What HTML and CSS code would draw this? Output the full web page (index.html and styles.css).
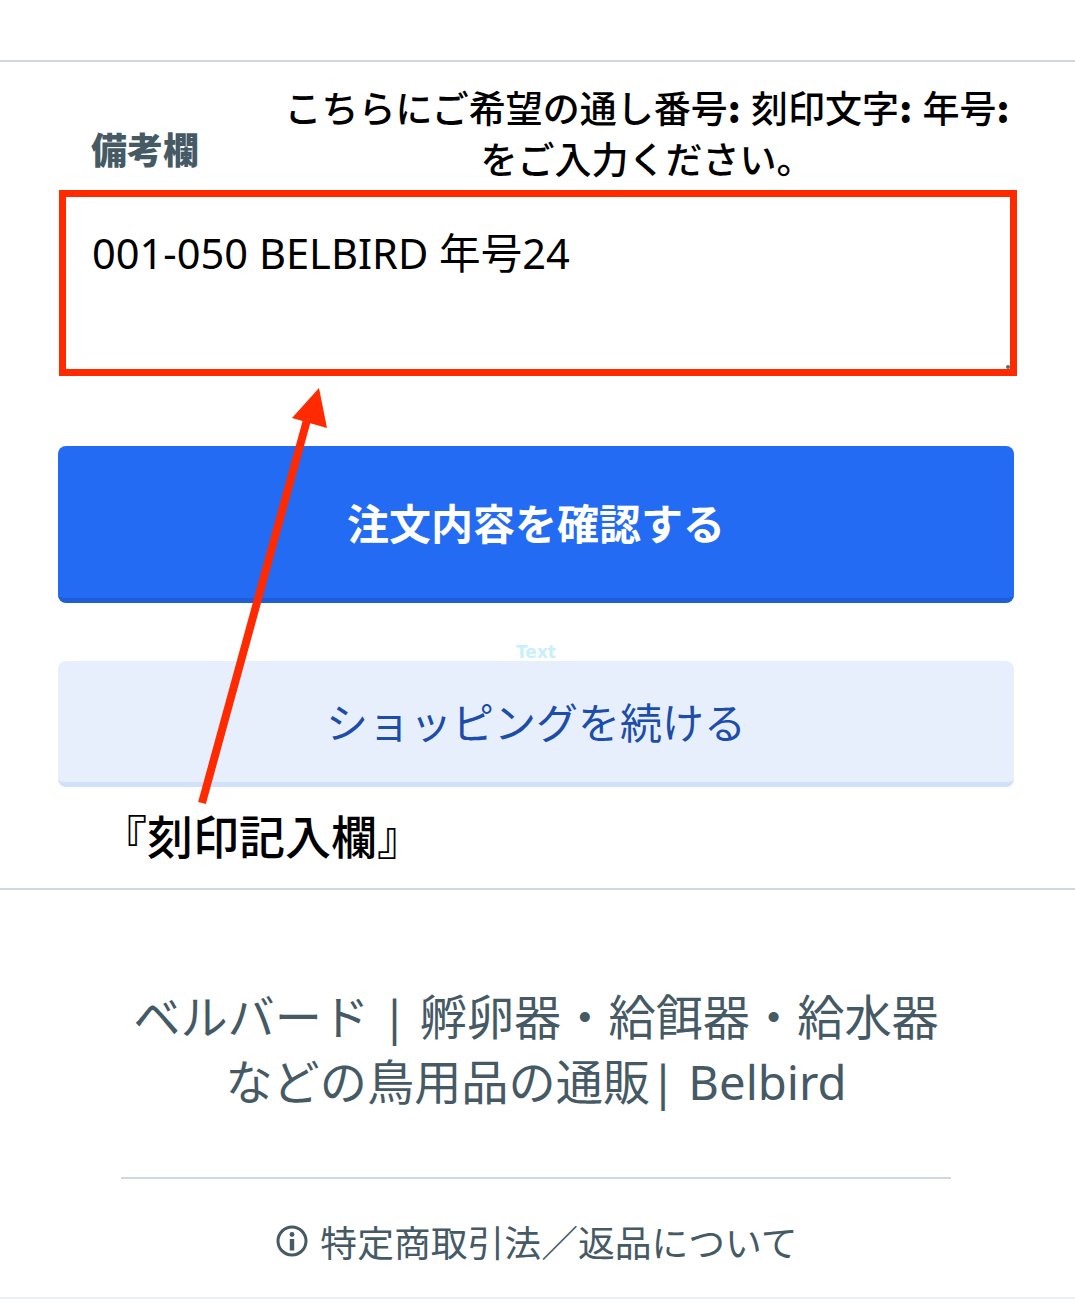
FILE: index.html
```html
<!DOCTYPE html>
<html lang="ja">
<head>
<meta charset="utf-8">
<title>Belbird</title>
<link rel="stylesheet" href="styles.css">
</head>
<body>
<div class="page">
  <section class="form">
    <div class="note-head">
      <label class="note-label" for="note">備考欄</label>
      <p class="hint">こちらにご希望の通し番号<b>:</b> 刻印文字<b>:</b> 年号<b>:</b><br>をご入力ください。</p>
    </div>
    <div class="field">
      <textarea id="note" class="note-input">001-050 BELBIRD 年号24</textarea>
      <span class="grip"></span>
    </div>
    <button class="btn btn-primary">注文内容を確認する</button>
    <div class="ghost-text">Text</div>
    <button class="btn btn-secondary">ショッピングを続ける</button>
    <div class="callout">『刻印記入欄』</div>
  </section>
  <footer class="foot">
    <h2 class="shop-title">ベルバード | 孵卵器・給餌器・給水器<br>などの鳥用品の通販| Belbird</h2>
    <a class="legal" href="#">
      <svg class="info" viewBox="0 0 32 32" aria-hidden="true">
        <circle cx="16" cy="16" r="14" fill="none" stroke="currentColor" stroke-width="3"/>
        <circle cx="16" cy="9.5" r="2.4" fill="currentColor"/>
        <rect x="13.8" y="14" width="4.4" height="11.5" fill="currentColor"/>
      </svg>
      <span>特定商取引法／返品について</span>
    </a>
  </footer>
  <svg class="arrow" viewBox="0 0 1075 1303" aria-hidden="true">
    <path d="M202 803 L307 420" fill="none" stroke="#ff2a00" stroke-width="8"/>
    <path d="M319 388 L327 428 L292 418 Z" fill="#ff2a00"/>
  </svg>
</div>
</body>
</html>
```

FILE: styles.css
```css
* { box-sizing: border-box; }
html, body { margin: 0; background: #fff; }
body {
  font-family: "Noto Sans", "Noto Sans CJK JP", sans-serif;
  color: #455a64;
}
.page {
  position: relative;
  height: 1303px;
  overflow: hidden;
  padding-top: 60px;
}
.form {
  position: relative;
  height: 830px;
  border-top: 2px solid #cfd8dc;
  border-bottom: 2px solid #cfd8dc;
  padding: 0 61px 0 58px;
}
.note-head {
  display: flex;
  height: 128px;
  padding-left: 33px;
}
.note-label {
  margin-top: 61px;
  font-family: "Noto Sans CJK JP", sans-serif;
  font-size: 36px;
  line-height: 50px;
  font-weight: 900;
  width: 190px;
  flex: none;
}
.hint {
  margin: 20px 0 0;
  width: 732px;
  text-align: center;
  font-family: "Noto Sans CJK JP", sans-serif;
  font-size: 37px;
  line-height: 51px;
  font-weight: 500;
  word-spacing: 2px;
  color: #000;
  white-space: nowrap;
}
.hint b { font-weight: 900; }
.field {
  position: relative;
  width: 958px;
  height: 186px;
  margin-left: 1px;
}
.note-input {
  display: block;
  width: 100%;
  height: 100%;
  border: 7px solid #ff2a00;
  border-radius: 0;
  outline: none;
  resize: none;
  overflow: hidden;
  padding: 29px 26px;
  font-family: inherit;
  font-size: 41.6px;
  line-height: 54px;
  color: #000;
  background: #fff;
}
.grip {
  position: absolute;
  right: 7px;
  bottom: 7px;
  width: 4px;
  height: 4px;
  border-radius: 50%;
  background: #666;
}
.btn {
  display: block;
  width: 956px;
  border: 0;
  border-radius: 8px;
  font-family: inherit;
  font-size: 42px;
  padding: 0;
}
.btn-primary {
  margin-top: 70px;
  height: 157px;
  padding-bottom: 2px;
  background: #246bf3;
  border-bottom: 5px solid #1f5ed8;
  color: #fff;
  font-weight: 700;
}
.ghost-text {
  width: 956px;
  height: 58px;
  padding: 40px 0 0;
  text-align: center;
  font-family: "DejaVu Sans", sans-serif;
  font-size: 17px;
  line-height: 18px;
  font-weight: 700;
  color: #c8effd;
}
.btn-secondary {
  height: 126px;
  padding-bottom: 2px;
  background: #e8effc;
  border-bottom: 5px solid #d2e0fb;
  color: #1c4da8;
}
.callout {
  position: absolute;
  left: 101px;
  top: 744px;
  font-family: "Noto Sans CJK JP", sans-serif;
  font-size: 46px;
  line-height: 56px;
  font-weight: 500;
  color: #000;
  white-space: nowrap;
}
.foot {
  display: flex;
  flex-direction: column;
  align-items: center;
}
.shop-title {
  margin: 95px 0 0 -3px;
  width: 830px;
  padding-bottom: 62px;
  border-bottom: 2px solid #cfd8dc;
  text-align: center;
  font-size: 47.2px;
  line-height: 65px;
  font-weight: 400;
  color: #455a64;
  white-space: nowrap;
}
.legal {
  display: flex;
  align-items: center;
  gap: 12px;
  margin: 36px 0 0 -1px;
  height: 52px;
  color: #455a64;
  font-size: 36.8px;
  text-decoration: none;
}
.info { width: 32px; height: 32px; flex: none; }
.foot::after {
  content: "";
  display: block;
  width: 100%;
  margin-top: 30px;
  border-top: 2px solid #eceff1;
}
.arrow {
  position: absolute;
  left: 0;
  top: 0;
  width: 1075px;
  height: 1303px;
  pointer-events: none;
}
```
